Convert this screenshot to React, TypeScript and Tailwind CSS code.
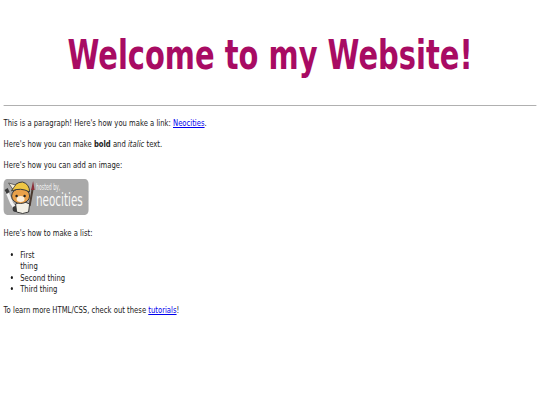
import React from 'react';

// The reference is horizontally squashed, so the page is laid out wider and scaled on x
const NeocitiesBadge = () => (
  <div className="relative w-[118px] h-[36px] bg-[#a9a9a9] rounded-[5px] overflow-hidden">
    <svg className="absolute left-0 top-0" width="50" height="36" viewBox="0 0 36 36" preserveAspectRatio="none">
      {/* brush */}
      <path d="M26 27 L29 10" stroke="#4a3a30" strokeWidth="2" />
      <path d="M27.5 11 L29.5 2 L31 11 Z" fill="#8c2f39" />
      {/* wrench */}
      <path d="M3 12 L8 24 L12 30" stroke="#f2f2f2" strokeWidth="3" fill="none" />
      <path d="M1 11 L3 15 L6 13 L4 9" fill="#3a3a3a" />
      <circle cx="12" cy="30" r="3" fill="#3a3a3a" />
      {/* body */}
      <path d="M12 25 Q19 21 26 25 L25 33 Q19 36 13 33 Z" fill="#f3f0e6" stroke="#3a3a3a" strokeWidth="1" />
      {/* head */}
      <ellipse cx="17" cy="17" rx="9" ry="7.5" fill="#e9a14b" stroke="#3a3a3a" strokeWidth="1" />
      <ellipse cx="17" cy="20" rx="4" ry="3" fill="#fbeedb" />
      {/* helmet */}
      <path d="M8 12 Q11 3 19 3 Q26 5 26 13 Q17 8 8 12 Z" fill="#eec643" stroke="#3a3a3a" strokeWidth="1" />
      <path d="M9 10 L5 4 L12 6 Z" fill="#f5f0dc" stroke="#3a3a3a" strokeWidth="0.7" />
      <circle cx="13" cy="17" r="1.2" fill="#222" />
      <circle cx="21" cy="17" r="1.2" fill="#222" />
    </svg>
    <span className="absolute left-[45px] top-[4px] origin-left scale-x-[0.8] text-[8px] leading-[9px] text-[#f2f2f2]">hosted by,</span>
    <span className="absolute left-[45px] top-[13px] origin-left scale-x-[0.85] text-[17px] leading-[17px] text-[#f7f7f7]">neocities</span>
  </div>
);

export default function App() {
  return (
    <div className="h-[405px] w-[540px] bg-white overflow-hidden">
      <div className="w-[750px] origin-top-left scale-x-[0.72] px-[5px] text-[9.5px] leading-[11.5px] text-[#1a1a1a] font-['DejaVu_Sans',sans-serif]">
        <h1 className="pt-[32px] pb-[27px] text-center text-[40.2px] leading-[46px] font-bold text-[#a80b63]">
          Welcome to my Website!
        </h1>
        <hr className="border-0 h-px bg-[#b0b0b0]" />
        <p className="mt-[11px]">
          This is a paragraph! Here's how you make a link:{' '}
          <a href="#" className="text-[#0000ee] underline">Neocities</a>.
        </p>
        <p className="mt-[9.5px]">
          Here's how you can make <b>bold</b> and <i>italic</i> text.
        </p>
        <p className="mt-[9.5px]">Here's how you can add an image:</p>
        <div className="mt-[8px]">
          <NeocitiesBadge />
        </div>
        <p className="mt-[12px]">Here's how to make a list:</p>
        <ul className="mt-[10.5px] pl-[23px] list-disc">
          <li className="w-[40px]">First thing</li>
          <li>Second thing</li>
          <li>Third thing</li>
        </ul>
        <p className="mt-[9.5px]">
          To learn more HTML/CSS, check out these{' '}
          <a href="#" className="text-[#0000ee] underline">tutorials</a>!
        </p>
      </div>
    </div>
  );
}
